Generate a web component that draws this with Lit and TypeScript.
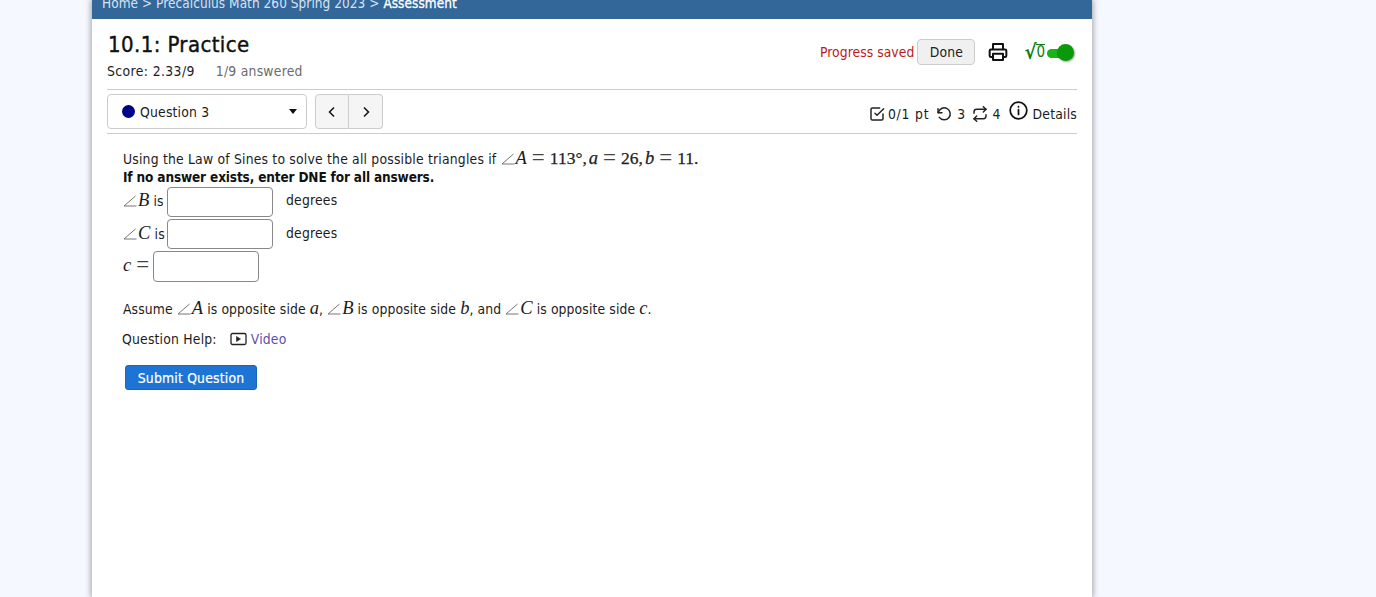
import { LitElement, html, css } from "lit";
import { customElement } from "lit/decorators.js";

const ang = html`<svg class="ang" width="14" height="12" viewBox="0 0 14 12"><path d="M12.500 1 L1 11 H13.500" fill="none" stroke="#666" stroke-width="0.9"/></svg>`;

@customElement("app-root")
export class AppRoot extends LitElement {
  static styles = css`
    :host { display: block; min-height: 597px; height: 597px; overflow: hidden; background: #f6f8ff; font-family: "DejaVu Sans", sans-serif; font-stretch: condensed; font-size: 13.8px; letter-spacing: .2px; color: #1c1c1c; }
    .page { width: 1000px; height: 597px; margin-left: 92px; background: #fff; box-shadow: 0 0 6px 1px rgba(0,0,0,.35); overflow: hidden; }
    .crumbs { height: 19px; background: #336699; color: #d6e3f3; padding-left: 10px; line-height: 17px; overflow: hidden; font-size: 13.5px; letter-spacing: .05px; }
    .crumbs span { display: block; margin-top: -5px; }
    .crumbs b { color: #fff; font-weight: 400; -webkit-text-stroke: .3px #fff; }
    .body { padding: 0 15px; }
    .head { display: flex; justify-content: space-between; height: 70px; border-bottom: 1px solid #ccc; }
    h1 { margin: 11px 0 0 1px; font-size: 22px; line-height: 30px; font-weight: 400; color: #111; letter-spacing: .4px; -webkit-text-stroke: .4px #111; }
    .score { margin-top: 2px; line-height: 18px; display: flex; gap: 21px; letter-spacing: .4px; }
    .score .muted { color: #6b6b6b; letter-spacing: .25px; }
    .tools { display: flex; align-items: center; height: 26px; margin-top: 20px; margin-right: 3px; }
    .saved { color: #b71c1c; margin-right: 3px; letter-spacing: .05px; }
    .done { width: 58px; height: 26px; box-sizing: border-box; border: 1px solid #ccc; border-radius: 4px; background: #f0f0f0; font: inherit; letter-spacing: .2px; color: #222; padding: 0; }
    .print { margin-left: 13px; display: block; }
    .sqrt { margin-left: 16px; color: #0a7d0a; font-size: 20px; line-height: 20px; display: flex; font-weight: 700; letter-spacing: 0; }
    .sqrt i { font-style: normal; font-size: 15px; border-top: 1.5px solid #0a7d0a; line-height: 15px; height: 16px; margin-top: 2px; font-weight: 400; }
    .toggle { margin-left: 2px; width: 27px; height: 18px; position: relative; }
    .toggle::before { content: ""; position: absolute; left: 0; top: 6px; width: 22px; height: 9px; border-radius: 5px; background: #17b317; }
    .toggle::after { content: ""; position: absolute; right: 0; top: 1px; width: 17px; height: 17px; border-radius: 50%; background: #0a990a; box-shadow: 1px 1px 2px rgba(0,0,0,.4); }
    .qbar { display: flex; align-items: flex-start; padding-top: 4px; box-sizing: border-box; border-bottom: 1px solid #ccc; height: 44px; }
    .select { width: 200px; height: 35px; box-sizing: border-box; border: 1px solid #ccc; border-radius: 4px; display: flex; align-items: center; padding: 0 9px 0 14px; }
    .dot { width: 13px; height: 13px; border-radius: 50%; background: #000088; margin-right: 5px; }
    .select .label { flex: 1; }
    .caret { width: 0; height: 0; border-left: 4px solid transparent; border-right: 4px solid transparent; border-top: 5px solid #111; }
    .nav { display: flex; margin-left: 8px; }
    .nav button { width: 34px; height: 35px; padding: 0; box-sizing: border-box; background: #f5f5f5; border: 1px solid #ccc; display: flex; align-items: center; justify-content: center; }
    .nav button:first-child { border-radius: 4px 0 0 4px; }
    .nav button:last-child { border-radius: 0 4px 4px 0; border-left: 0; }
    .meta { margin-left: auto; display: flex; align-items: center; height: 35px; margin-top: 2px; }
    .meta svg { display: block; }
    .pts { margin-left: 3px; letter-spacing: .8px; }
    .undo { margin-left: 7px; }
    .n3 { margin-left: 5px; }
    .retry { margin-left: 7px; }
    .n4 { margin-left: 4px; }
    .info { margin: -6px 0 0 8px; }
    .det { margin-left: 5px; }
    .q { padding: 15px 16px 0; }
    .l { line-height: 18px; }
    .l1 { height: 19px; line-height: 18px; white-space: nowrap; }
    .bold { font-weight: 700; color: #111; font-size: 13.5px; letter-spacing: -.15px; }
    .m { font-family: "Liberation Serif", serif; font-size: 17.5px; color: #222; font-stretch: normal; -webkit-text-stroke: .25px #222; letter-spacing: 0; }
    .e { display: inline-block; font-size: 23px; line-height: 0; margin: 0 5px; -webkit-text-stroke: 0; color: #444; vertical-align: -1px; }
    .sp { margin-right: 2px; }
    .mi { font-family: "Liberation Serif", serif; font-stretch: normal; font-style: italic; font-size: 18.5px; letter-spacing: 0; }
    .ang { vertical-align: -1px; margin-right: 1px; }
    .row { display: flex; align-items: center; }
    .row > span { margin-bottom: 2px; }
    .row.first > span { margin-bottom: 4px; }
    .r1 { height: 32px; }
    .r3 { height: 33px; }
    .lab { flex: none; width: 40px; white-space: nowrap; }
    .lab2 { flex: none; width: 26px; white-space: nowrap; }
    .lab2 .e { margin-right: 0; }
    .row input { box-sizing: border-box; height: 31px; width: 106px; border: 1px solid #888; border-radius: 4px; margin: 0 13px 0 4px; background: #fff; padding: 0; }
    .r1 input { height: 30px; }
    .assume { margin-top: 13px; line-height: 24px; white-space: nowrap; letter-spacing: .12px; }
    .help { margin: 6px 0 0 -1px; line-height: 24px; display: flex; align-items: center; }
    .help svg { margin: 0 4px 0 13px; display: block; }
    .help a { color: #5b4fb0; text-decoration: none; }
    .submit { display: block; margin: 14px 0 0 2px; width: 132px; height: 25px; background: #1e74d4; color: #fff; border: 1px solid #1a66bc; border-radius: 3px; font: inherit; letter-spacing: .2px; -webkit-text-stroke: .2px #fff; padding: 0; }
  `;

  render() {
    return html`<div class="page">
      <div class="crumbs"><span>Home &gt; Precalculus Math 260 Spring 2023 &gt; <b>Assessment</b></span></div>
      <div class="body">
        <div class="head">
          <div>
            <h1>10.1: Practice</h1>
            <div class="score"><span>Score: 2.33/9</span><span class="muted">1/9 answered</span></div>
          </div>
          <div class="tools">
            <span class="saved">Progress saved</span>
            <button class="done">Done</button>
            <svg class="print" width="20" height="20" viewBox="0 0 24 24" fill="none" stroke="#111" stroke-width="2.400" stroke-linejoin="round"><path d="M6 9V2.500h12V9"/><path d="M6 18H3.500A1.500 1.500 0 0 1 2 16.500v-6A1.500 1.500 0 0 1 3.500 9h17a1.500 1.500 0 0 1 1.500 1.500v6a1.500 1.500 0 0 1-1.500 1.500H18"/><path d="M6 14h12v7.500H6z"/></svg>
            <span class="sqrt">√<i>0</i></span>
            <span class="toggle"></span>
          </div>
        </div>
        <div class="qbar">
          <div class="select"><span class="dot"></span><span class="label">Question 3</span><span class="caret"></span></div>
          <div class="nav">
            <button><svg width="12" height="12" viewBox="0 0 12 12" fill="none" stroke="#111" stroke-width="1.500"><path d="M8 1.500 3.500 6 8 10.500"/></svg></button>
            <button><svg width="12" height="12" viewBox="0 0 12 12" fill="none" stroke="#111" stroke-width="1.500"><path d="M4 1.500 8.500 6 4 10.500"/></svg></button>
          </div>
          <div class="meta">
            <svg width="16" height="16" viewBox="0 0 24 24" fill="none" stroke="#222" stroke-width="2.200" stroke-linecap="round" stroke-linejoin="round"><path d="M9 11l3 3L22 4"/><path d="M21 12v7a2 2 0 0 1-2 2H5a2 2 0 0 1-2-2V5a2 2 0 0 1 2-2h11"/></svg>
            <span class="pts">0/1 pt</span>
            <svg class="undo" width="16" height="16" viewBox="0 0 24 24" fill="none" stroke="#222" stroke-width="2.200" stroke-linecap="round" stroke-linejoin="round"><path d="M3 4v6h6"/><path d="M3.500 10A9 9 0 1 1 5 17"/></svg>
            <span class="n3">3</span>
            <svg class="retry" width="16" height="16" viewBox="0 0 24 24" fill="none" stroke="#222" stroke-width="2.200" stroke-linecap="round" stroke-linejoin="round"><path d="M17 1l4 4-4 4"/><path d="M3 11V9a4 4 0 0 1 4-4h14"/><path d="M7 23l-4-4 4-4"/><path d="M21 13v2a4 4 0 0 1-4 4H3"/></svg>
            <span class="n4">4</span>
            <svg class="info" width="19" height="19" viewBox="0 0 24 24" fill="none" stroke="#111" stroke-width="2.200" stroke-linecap="round"><circle cx="12" cy="12" r="10.500"/><path d="M12 11v6"/><path d="M12 7v.5"/></svg>
            <span class="det">Details</span>
          </div>
        </div>
        <div class="q">
          <div class="l l1">Using the Law of Sines to solve the all possible triangles if ${ang}<span class="mi">A</span><span class="m"><span class="e">=</span>113°,<span class="sp"></span><span class="mi">a</span><span class="e">=</span>26,<span class="sp"></span><span class="mi">b</span><span class="e">=</span>11.</span></div>
          <div class="l bold">If no answer exists, enter DNE for all answers.</div>
          <div class="row r1 first"><span class="lab">${ang}<span class="mi">B</span> is</span><input aria-label="angle B" /><span>degrees</span></div>
          <div class="row r1"><span class="lab">${ang}<span class="mi">C</span> is</span><input aria-label="angle C" /><span>degrees</span></div>
          <div class="row r3"><span class="lab2"><span class="mi">c</span><span class="m"><span class="e">=</span></span></span><input aria-label="c" /></div>
          <div class="assume">Assume ${ang}<span class="mi">A</span> is opposite side <span class="mi">a</span>, ${ang}<span class="mi">B</span> is opposite side <span class="mi">b</span>, and ${ang}<span class="mi">C</span> is opposite side <span class="mi">c</span>.</div>
          <div class="help">Question Help:
            <svg width="17" height="14" viewBox="0 0 17 14" fill="none" stroke="#222" stroke-width="1.300"><rect x="1" y="1.500" width="15" height="11" rx="1.500"/><path d="M6.500 4.500v5l4-2.500z" fill="#222" stroke-width=".6"/></svg>
            <a href="#">Video</a>
          </div>
          <button class="submit">Submit Question</button>
        </div>
      </div>
    </div>`;
  }
}
